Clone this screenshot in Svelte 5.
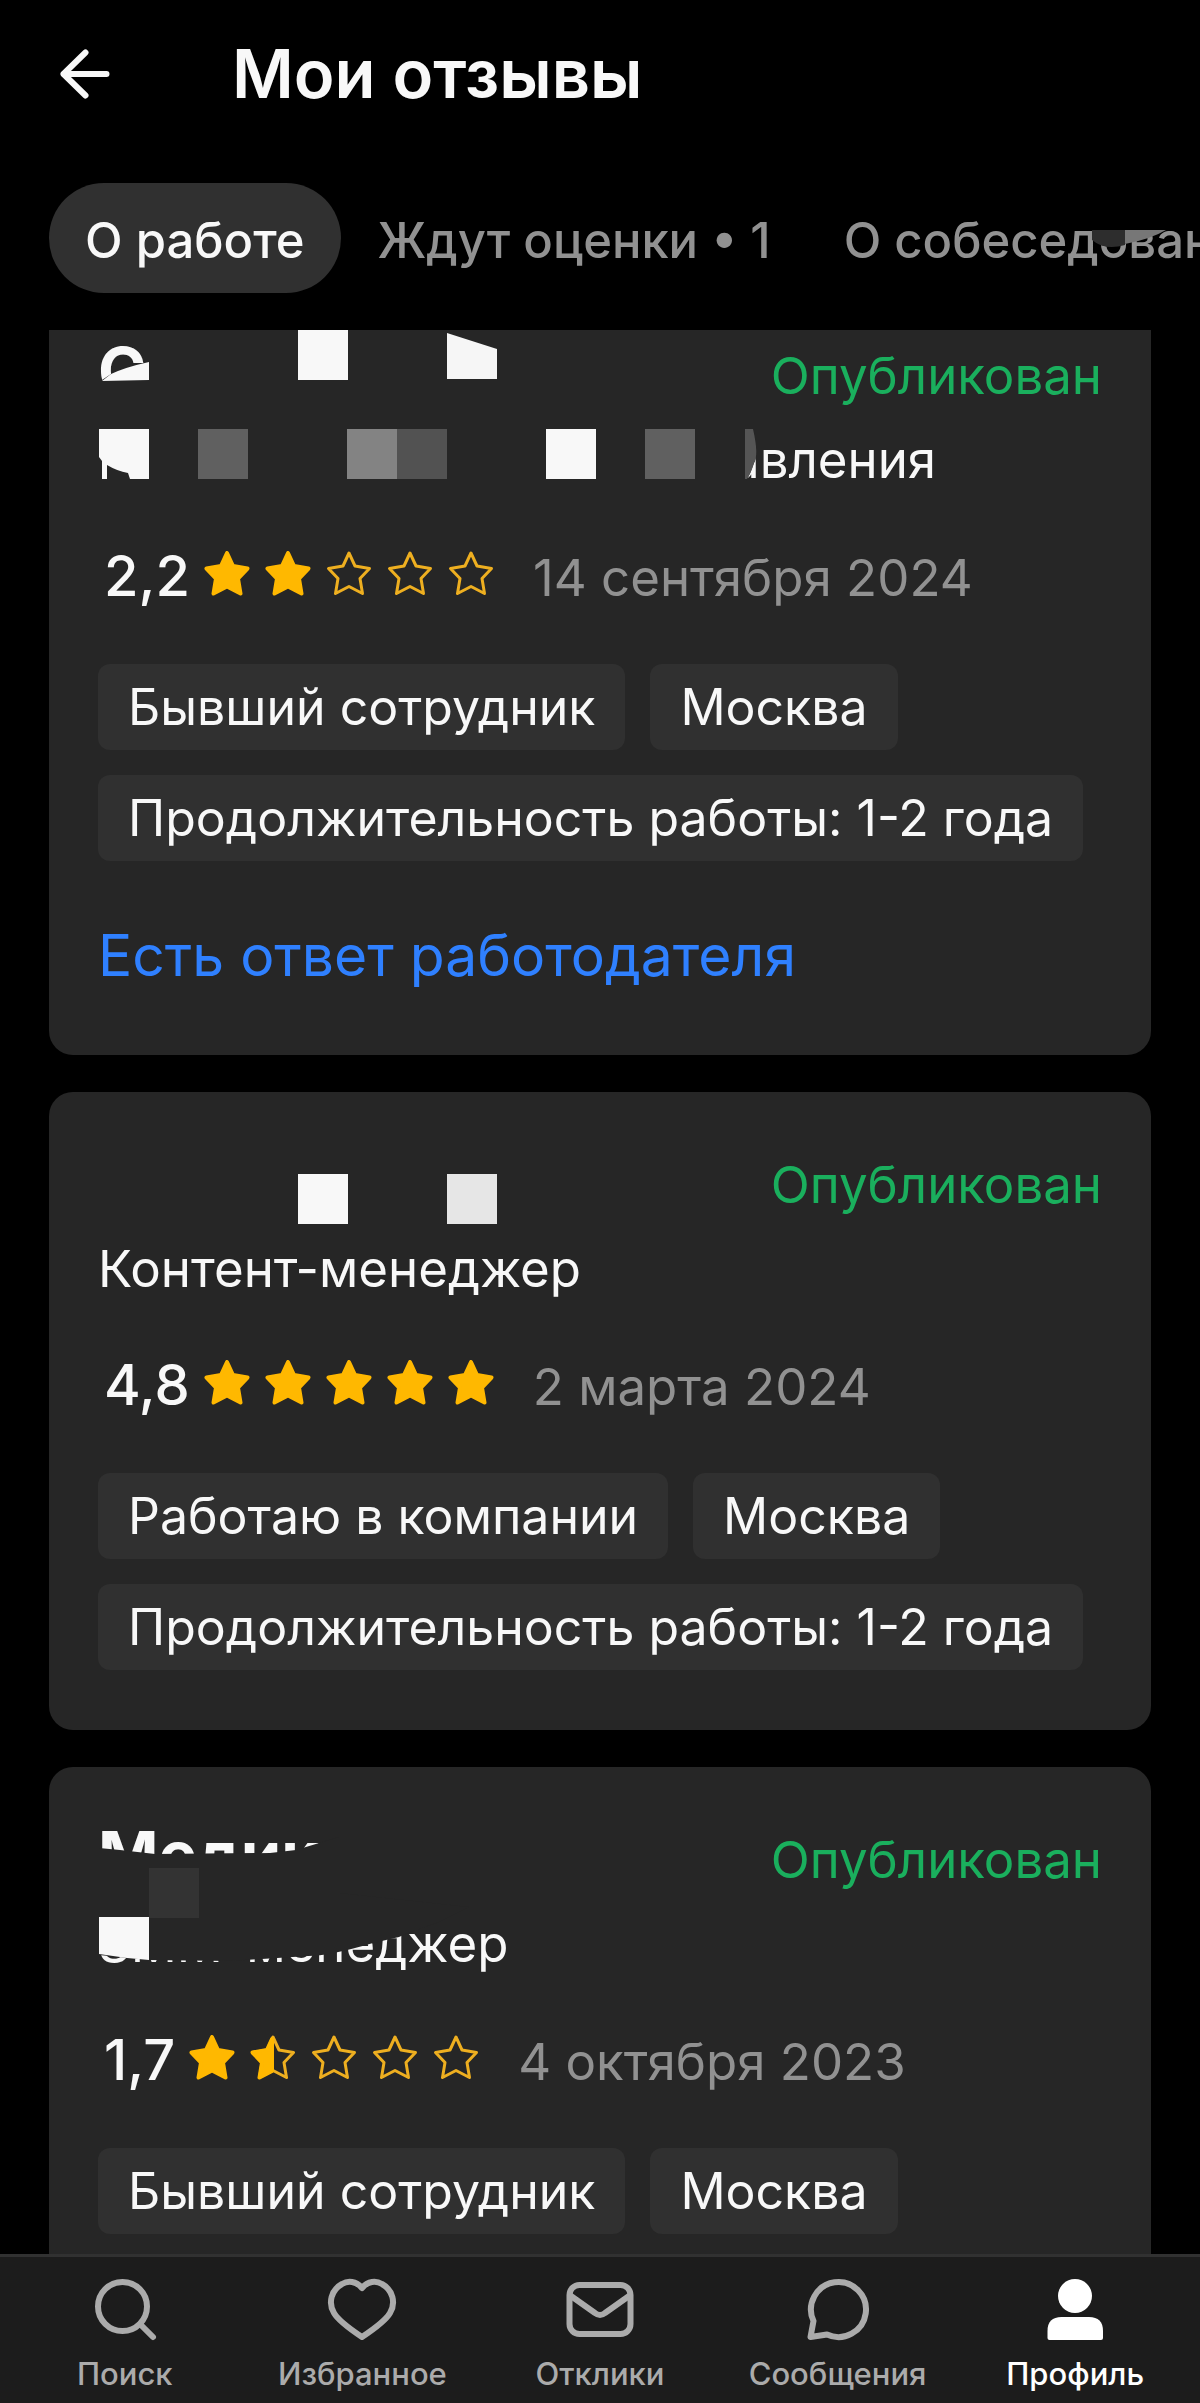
<script lang="ts">
	type Block = { x: number; y: number; fill: string };

	type Review = {
		company: string;
		position: string;
		withheld?: boolean;
		score: string;
		stars: number[];
		date: string;
		tags: string[];
		reply?: boolean;
		cover: 'first' | 'second' | 'third';
		blocks: Block[];
	};

	const tabs = ['О работе', 'Ждут оценки • 1', 'О собеседованиях'];
	let activeTab = $state(0);

	const duration = 'Продолжительность работы: 1-2 года';

	const reviews: Review[] = [
		{
			company: 'С',
			position: 'авления',
			withheld: true,
			score: '2,2',
			stars: [1, 1, 0, 0, 0],
			date: '14 сентября 2024',
			tags: ['Бывший сотрудник', 'Москва', duration],
			reply: true,
			cover: 'first',
			blocks: [
				{ x: 249, y: 47, fill: '#f8f8f8' },
				{ x: 149, y: 146, fill: '#606060' },
				{ x: 298, y: 146, fill: '#838383' },
				{ x: 348, y: 146, fill: '#525252' },
				{ x: 497, y: 146, fill: '#f8f8f8' },
				{ x: 596, y: 146, fill: '#606060' }
			]
		},
		{
			company: '',
			position: 'Контент-менеджер',
			score: '4,8',
			stars: [1, 1, 1, 1, 1],
			date: '2 марта 2024',
			tags: ['Работаю в компании', 'Москва', duration],
			cover: 'second',
			blocks: [
				{ x: 249, y: 82, fill: '#f8f8f8' },
				{ x: 398, y: 82, fill: '#e6e6e6' }
			]
		},
		{
			company: 'Медик',
			position: 'SMM-менеджер',
			score: '1,7',
			stars: [1, 0.5, 0, 0, 0],
			date: '4 октября 2023',
			tags: ['Бывший сотрудник', 'Москва'],
			cover: 'third',
			blocks: [{ x: 100, y: 101, fill: '#333333' }]
		}
	];

	const starPoints =
		'23,2 29,15 43.5,17.5 34,27.5 36.5,42.5 23,35.5 9.5,42.5 12,27.5 2.5,17.5 17,15';

	const nav = [
		{ label: 'Поиск', icon: 'search' },
		{ label: 'Избранное', icon: 'heart' },
		{ label: 'Отклики', icon: 'mail' },
		{ label: 'Сообщения', icon: 'chat' },
		{ label: 'Профиль', icon: 'profile' }
	];
</script>

<div class="screen">
	<header>
		<button class="back" aria-label="Назад">
			<svg viewBox="0 0 50 50">
				<path d="M25.500 3.500 L3.500 25 L25.500 46.500 M3.500 25 H46.500" />
			</svg>
		</button>
		<h1>Мои отзывы</h1>
	</header>

	<div class="tabs">
		{#each tabs as tab, i}
			<button class="tab" class:active={i === activeTab} onclick={() => (activeTab = i)}>{tab}</button>
		{/each}
		<svg class="smudge" viewBox="0 0 108 36" aria-hidden="true">
			<path d="M17 0 H91 V7 L50 21 Q28 28 17 16 Z" fill="#000" />
			<path d="M17 7 H50 V22 Q30 28 17 17 Z" fill="#2d2d2d" />
			<path d="M50 7 H91 Q76 16 50 21 Z" fill="#777" />
		</svg>
	</div>

	<main>
		<div class="list">
			{#each reviews as review}
				<article>
					<div class="top">
						<h2>{review.company || '\u00a0'}</h2>
						<span class="status">Опубликован</span>
					</div>
					<p class="position">
						{#if review.withheld}<span class="withheld"></span>{/if}{review.position}
					</p>

					<div class="rating">
						<strong>{review.score}</strong>
						<div class="stars">
							{#each review.stars as fill}
								<svg viewBox="0 0 46 45">
									{#if fill === 1}
										<polygon class="full" points={starPoints} />
									{:else}
										<polygon class="empty" points={starPoints} />
									{/if}
									{#if fill === 0.5}
										<path
											class="full"
											d="M22 4 L17 15 L2.500 17.500 L12 27.500 L9.500 42.500 L22 36 Z"
										/>
									{/if}
								</svg>
							{/each}
						</div>
						<time>{review.date}</time>
					</div>

					<ul class="tags">
						{#each review.tags as tag}
							<li>{tag}</li>
						{/each}
					</ul>

					{#if review.reply}
						<a class="reply" href="#reply">Есть ответ работодателя</a>
					{/if}

					<svg class="cover" width="1102" height="240" aria-hidden="true">
						{#if review.cover === 'first'}
							<path d="M50 99 L62 91 Q77 83 101 79 V126 H50 Z" fill="#262626" />
							<path d="M53 98 L62 91 Q77 84 100 79 V97 Z" fill="#f8f8f8" />
							<path d="M398 50 L448 66 V96 H398 Z" fill="#f6f6f6" />
							<path d="M50 146 H100 V196 H81 L79 190 Q68 188 58 182 V196 H53 V178 L50 174 Z" fill="#f8f8f8" />
							<path d="M660 146 H704 Q710 172 705 180 Q702 190 696 200 H660 Z" fill="#262626" />
							<path d="M696 146 H704 Q710 172 705 180 Q702 190 698 196 H696 Z" fill="#555" />
						{:else if review.cover === 'third'}
							<path
								d="M50 81 L71 83 L106 87 L221 86 L247 83 L290 70 V126 L420 140 L390 155 L359 166 L350 170 L324 176 Q280 189 259 189 L181 194 L100 193 L50 188 Z"
								fill="#262626"
							/>
							<path d="M50 150 H100 V193 Q74 191 50 187 Z" fill="#f8f8f8" />
						{/if}
						{#each review.blocks as block}
							<rect x={block.x} y={block.y} width="50" height="50" fill={block.fill} />
						{/each}
					</svg>
				</article>
			{/each}
		</div>
	</main>

	<nav>
		{#each nav as item}
			<a href="#{item.icon}" class:current={item.icon === 'profile'}>
				<svg viewBox="0 0 74 74">
					{#if item.icon === 'search'}
						<circle cx="34.5" cy="34.5" r="24.500" />
						<path d="M53 53 L65 65" />
					{:else if item.icon === 'heart'}
						<path
							d="M37 16 C31 9 23 8.500 17 12 C6 18 3 31 9 41 C13 48 25 57 37 65 C49 57 61 48 65 41 C71 31 68 18 57 12 C51 8.500 43 9 37 16 Z"
						/>
					{:else if item.icon === 'mail'}
						<rect x="6.500" y="13" width="61" height="49" rx="10" />
						<path d="M8 24 L32 41 Q37 45 42 41 L66 24" />
					{:else if item.icon === 'chat'}
						<path d="M12.500 49 L9.500 65 L26 62.500 A27.500 27.500 0 1 0 12.500 49 Z" />
					{:else}
						<circle class="solid" cx="37" cy="24" r="17" />
						<path
							class="solid"
							d="M9.500 59 Q9.500 45 23.500 45 H51 Q65 45 65 59 V66 Q65 68 63 68 H11.500 Q9.500 68 9.500 66 Z"
						/>
					{/if}
				</svg>
				<span>{item.label}</span>
			</a>
		{/each}
	</nav>
</div>

<style>
	:global(body) {
		margin: 0;
		background: #000;
	}

	.screen {
		display: flex;
		flex-direction: column;
		height: 100vh;
		overflow: hidden;
		background: #000;
		color: #f8f8f8;
		font-family: Inter, 'Liberation Sans', sans-serif;
	}

	h1,
	h2,
	p,
	ul {
		margin: 0;
		padding: 0;
	}

	button {
		border: 0;
		background: none;
		color: inherit;
		font-family: inherit;
		cursor: pointer;
	}

	a {
		text-decoration: none;
	}

	header {
		display: flex;
		align-items: center;
		gap: 122px;
		padding: 34px 60px 0;
	}

	.back {
		padding: 0;
		width: 50px;
		height: 50px;
	}

	.back svg {
		display: block;
		fill: none;
		stroke: #f8f8f8;
		stroke-width: 6;
		stroke-linecap: round;
		stroke-linejoin: round;
	}

	h1 {
		font-size: 67px;
		line-height: 80px;
		font-weight: 600;
	}

	.tabs {
		position: relative;
		display: flex;
		gap: 1px;
		padding: 69px 49px 37px;
		overflow: hidden;
	}

	.tab {
		flex: none;
		padding: 4px 36px 0;
		height: 110px;
		border-radius: 55px;
		color: #919191;
		font-size: 49px;
		font-weight: 500;
		white-space: nowrap;
	}

	.tab.active {
		background: #303030;
		color: #f8f8f8;
	}

	.smudge {
		position: absolute;
		right: 17px;
		top: 109px;
		width: 108px;
		height: 36px;
	}

	main {
		flex: 1;
		min-height: 0;
		overflow: hidden;
	}

	/* the list is scrolled slightly under the tabs */
	.list {
		display: flex;
		flex-direction: column;
		gap: 37px;
		margin-top: -47px;
		padding: 0 49px;
	}

	article {
		position: relative;
		padding: 48px 49px 60px;
		border-radius: 24px;
		background: #262626;
	}

	.top {
		display: flex;
		justify-content: space-between;
		align-items: baseline;
		height: 80px;
		line-height: 80px;
	}

	h2 {
		font-size: 65px;
		font-weight: 700;
	}

	.status {
		color: #1aaf5d;
		font-size: 51px;
	}

	.position {
		margin-top: 19px;
		font-size: 51px;
		line-height: 60px;
	}

	.withheld {
		display: inline-block;
		width: 633px;
	}

	.rating {
		display: flex;
		align-items: baseline;
		margin-top: 52px;
		padding-left: 6px;
		line-height: 68px;
	}

	strong {
		font-size: 56px;
		font-weight: 500;
	}

	.stars {
		display: flex;
		align-items: baseline;
		gap: 15px;
		margin: 0 39px 0 14px;
	}

	.stars svg {
		width: 46px;
		height: 45px;
	}

	.full {
		fill: #ffb800;
		stroke: #ffb800;
		stroke-width: 4;
		stroke-linejoin: round;
	}

	.empty {
		fill: none;
		stroke: #eeaf20;
		stroke-width: 3;
		stroke-linejoin: round;
	}

	time {
		color: #919191;
		font-size: 51px;
	}

	.tags {
		display: flex;
		flex-wrap: wrap;
		gap: 25px;
		margin-top: 52px;
		list-style: none;
	}

	.tags li {
		padding: 0 30px;
		border-radius: 12px;
		background: #303030;
		font-size: 50px;
		line-height: 86px;
	}

	.reply {
		display: block;
		margin-top: 56px;
		color: #2f80ff;
		font-size: 57px;
		line-height: 78px;
	}

	.cover {
		position: absolute;
		top: 0;
		left: 0;
		pointer-events: none;
	}

	nav {
		display: flex;
		padding: 15px 6px 0;
		height: 131px;
		border-top: 3px solid #313131;
		background: #1c1c1c;
	}

	nav a {
		flex: 1;
		display: flex;
		flex-direction: column;
		align-items: center;
		gap: 8px;
		color: #ababab;
		font-size: 31px;
		font-weight: 500;
		line-height: 40px;
	}

	nav svg {
		width: 74px;
		height: 74px;
		fill: none;
		stroke: currentColor;
		stroke-width: 6;
		stroke-linecap: round;
		stroke-linejoin: round;
	}

	nav .solid {
		fill: currentColor;
		stroke: none;
	}

	nav .current {
		color: #fff;
	}
</style>
